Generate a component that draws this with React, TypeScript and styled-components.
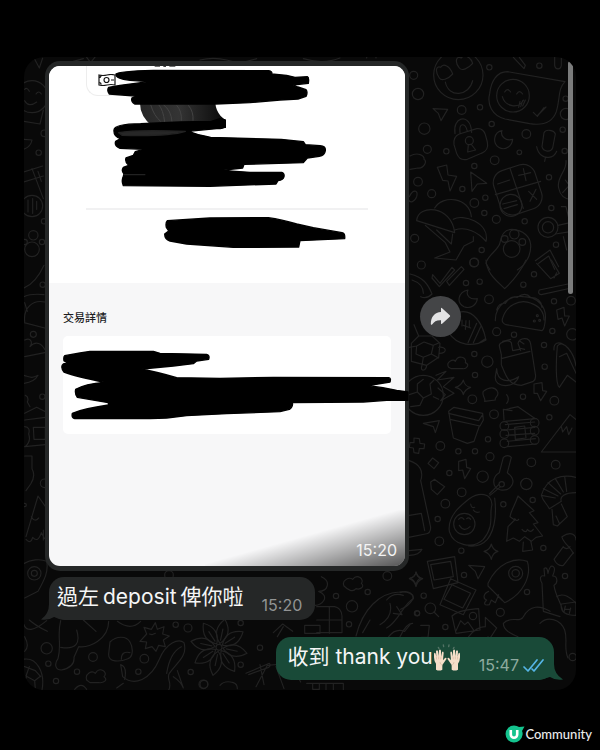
import React from "react";
import styled, { createGlobalStyle } from "styled-components";

const GlobalStyle = createGlobalStyle`
  * { box-sizing: border-box; }
  body { margin: 0; background: #000; }
  button { font: inherit; }
`;

const latin = `Inter, "Noto Sans CJK TC", sans-serif`;

const Page = styled.div`
  display: flex;
  flex-direction: column;
  min-height: 100vh;
  padding: 57px 24px 0;
  background: #000;
  font-family: ${latin};
`;

const ChatPanel = styled.main`
  position: relative;
  display: flex;
  flex-direction: column;
  gap: 6px;
  padding: 4px 22px 10px 21px;
  border-radius: 20px;
  background: #090909;
  overflow: hidden;
`;

const Wallpaper = styled.svg`
  position: absolute;
  inset: 0;
  width: 100%;
  height: 100%;
  fill: none;
  stroke: #222222;
  stroke-width: 3.5;
  stroke-linecap: round;
  stroke-linejoin: round;
`;

const ScrollThumb = styled.div`
  position: absolute;
  top: 4px;
  right: 3px;
  width: 5px;
  height: 233px;
  border-radius: 3px;
  background: #7b7c7c;
`;

const MessageRow = styled.div<{ $mine?: boolean }>`
  position: relative;
  display: flex;
  align-items: center;
  gap: 11px;
  justify-content: ${(p) => (p.$mine ? "flex-end" : "flex-start")};
  margin-top: ${(p) => (p.$mine ? "11px" : "0")};
`;

const PhotoBubble = styled.div`
  position: relative;
  flex: 0 1 364px;
  padding: 5px 4px;
  border-radius: 15px;
  background: #252727;
`;

const Photo = styled.div`
  position: relative;
  border-radius: 11px;
  background: #f7f7f8;
  overflow: hidden;
`;

const ReceiptHead = styled.div`
  height: 217px;
  padding: 0 37px;
  background: #fff;
`;

const ReceiptChip = styled.div`
  width: 180px;
  height: 30px;
  padding: 4px 11px;
  border: 1px solid #ededed;
  border-width: 0 0 1px 1px;
  border-radius: 0 0 0 12px;
`;

const Divider = styled.hr`
  height: 2px;
  margin: 112px 0 0;
  border: 0;
  background: #f1f1f2;
`;

const ReceiptBody = styled.div`
  height: 283px;
  padding: 26px 14px;
`;

const SectionTitle = styled.h2`
  margin: 0 0 11px;
  color: #1d1d1f;
  font-family: "Noto Sans CJK TC", sans-serif;
  font-size: 11px;
  font-weight: 500;
  line-height: 16px;
`;

const DetailCard = styled.div`
  height: 98px;
  border-radius: 5px;
  background: #fff;
`;

const Shade = styled.div`
  position: absolute;
  right: 0;
  bottom: 0;
  width: 200px;
  height: 56px;
  background: linear-gradient(to bottom right, rgba(0, 0, 0, 0) 48%, rgba(0, 0, 0, 0.3) 72%, rgba(0, 0, 0, 0.66) 100%);
`;

const Scribbles = styled.svg`
  position: absolute;
  top: 5px;
  left: 4px;
  width: 360px;
  height: 500px;
  pointer-events: none;
`;

const Time = styled.time<{ $tone: "photo" | "grey" | "green" }>`
  color: ${(p) => ({ photo: "#f4f4f4", grey: "#929494", green: "#8eaa9f" })[p.$tone]};
  font-size: 16px;
  line-height: 18px;
`;

const PhotoTime = styled.div`
  position: absolute;
  right: 8px;
  bottom: 7px;
  display: flex;
`;

const ShareButton = styled.button`
  display: flex;
  flex: none;
  align-items: center;
  justify-content: center;
  width: 41px;
  height: 41px;
  padding: 0;
  border: 0;
  border-radius: 50%;
  background: #444547;
  cursor: pointer;
`;

const Bubble = styled.div<{ $mine?: boolean }>`
  position: relative;
  display: flex;
  align-items: flex-end;
  gap: 18px;
  min-height: 43px;
  margin-left: ${(p) => (p.$mine ? "0" : "4px")};
  padding: ${(p) => (p.$mine ? "0 10px 6px 12px" : "0 13px 6px 8px")};
  border-radius: 15px;
  background: ${(p) => (p.$mine ? "#194a38" : "#252727")};
`;

const Tail = styled.svg<{ $mine?: boolean }>`
  position: absolute;
  bottom: 0;
  ${(p) => (p.$mine ? "right: -9px;" : "left: -8px;")}
  width: 24px;
  height: 24px;
  fill: ${(p) => (p.$mine ? "#194a38" : "#252727")};
`;

const MessageText = styled.p`
  position: relative;
  display: flex;
  align-items: center;
  gap: 4px;
  margin: 0;
  padding-bottom: 2px;
  color: #f5f6f6;
  font-size: 21px;
  line-height: 30px;
  white-space: nowrap;
`;

const Words = styled.span`
  display: flex;
  align-items: center;
`;

const Status = styled.span`
  position: relative;
  display: flex;
  align-items: center;
  gap: 4px;
`;

const TickIcon = styled.svg`
  flex: none;
  overflow: visible;
`;

const Footer = styled.footer`
  display: flex;
  align-items: center;
  justify-content: flex-end;
  margin: 34px -16px 0 0;
`;

const BrandName = styled.span`
  color: #ececec;
  font-family: Lato, sans-serif;
  font-size: 13px;
  font-weight: 500;
  line-height: 20px;
`;

type Dot = [number, number, number];

const Dots = ({ items }: { items: Dot[] }) => (
  <>
    {items.map(([x, y, r], i) => (
      <circle key={i} cx={x} cy={y} r={r} />
    ))}
  </>
);

const upperRight: Dot[] = [
  [41, 76, 12], [54, 132, 17], [185, 180, 13], [240, 172, 8], [73, 236, 17], [275, 222, 8], [268, 52, 8],
  [418, 47, 8], [379, 252, 13], [358, 307, 7], [284, 331, 13], [82, 298, 12], [139, 304, 8], [223, 348, 8],
  [54, 395, 13], [95, 431, 12], [187, 417, 8], [223, 459, 13], [256, 443, 8], [253, 489, 8], [289, 508, 12],
  [374, 514, 8], [447, 382, 8], [454, 474, 8], [44, 565, 12], [245, 600, 8], [223, 637, 13], [468, 584, 8],
  [64, 645, 12], [488, 239, 8], [498, 192, 17], [497, 146, 8], [494, 303, 8],
];
const middleRight: Dot[] = [
  [222, 8, 13], [198, 69, 8], [239, 65, 8], [267, 118, 13], [402, 43, 8], [370, 74, 8], [462, 124, 8],
  [513, 122, 13], [457, 213, 8], [517, 223, 17], [290, 215, 12], [342, 224, 8], [223, 282, 8], [262, 305, 17],
  [432, 255, 8], [434, 320, 8], [225, 345, 8], [217, 418, 13], [369, 410, 8], [463, 422, 13], [448, 472, 8],
  [282, 463, 13], [264, 538, 8], [121, 558, 13], [175, 574, 8], [225, 574, 8], [270, 590, 12],
];
const lowerRight: Dot[] = [
  [394, 37, 13], [467, 44, 13], [379, 102, 17], [248, 80, 17], [148, 69, 8], [185, 127, 13], [136, 161, 13],
  [113, 207, 8], [118, 274, 13], [184, 302, 8], [398, 150, 8], [310, 163, 8], [430, 294, 8], [192, 375, 8],
  [71, 437, 8], [52, 490, 7], [136, 531, 8], [301, 487, 12], [381, 426, 8], [495, 378, 8], [518, 621, 11],
];
const lowerLeft: Dot[] = [
  [80, 325, 17], [85, 371, 8], [219, 351, 13], [171, 395, 8], [108, 423, 8], [373, 356, 13], [355, 395, 8],
  [467, 254, 8], [504, 264, 12], [512, 396, 8], [550, 433, 13], [43, 100, 20], [43, 100, 9], [447, 105, 13],
];
const lowerMiddle: Dot[] = [
  [562, 228, 13], [408, 288, 8], [503, 276, 8], [456, 319, 17], [447, 373, 8], [651, 340, 8], [122, 369, 8],
  [180, 443, 8], [122, 494, 8], [12, 553, 12], [273, 515, 8],
];

const Doodles = () => (
  <Wallpaper viewBox="0 0 1656 1899" preserveAspectRatio="xMidYMid slice" aria-hidden="true">
    <g transform="translate(1128 -21)">
      <Dots items={upperRight} />
      <circle cx="175" cy="75" r="74" />
      <path d="M136 96c10 50 72 42 82-4M118 84c-14-20-10-38 4-32 8-14 28-4 36 20-14 16-34 22-40 12zM178 54c-16-20-8-38 6-30 8-12 28-4 34 16-14 16-32 24-40 14z" />
      <path d="M322 65l173 30c-22 22-14 50-26 90-12 34-42 42-80 36l-74-14c-40-10-54-44-46-76 4-38 22-66 53-66z" />
      <circle cx="339" cy="137" r="49" />
      <path d="M307 140c8 30 48 38 64 10M314 126q8-14 18 0M350 132q8-14 18 0M360 154l-4 18m12-20l-6 18m14-20l-8 18M400 187l12 12 20-26m-18 22l24-24" />
      <path d="M99 176l44 2-20 34-8-22zM165 251c-8-50 40-60 48-18l2 14M180 248c-4-30 16-32 22-4M178 252l52-16c14-2 22 4 26 18l6 22c4 18-2 28-18 34l-42 18c-16 4-26-2-32-18l-8-26c-2-16 2-26 16-32z" />
      <circle cx="208" cy="272" r="12" />
      <path d="M205 284l-2 22 24-6-14-18M306 242c-24 4-30 36-10 50 20 12 40-4 42-24-22 6-38-10-32-26zM432 248c6-12 30-8 34 4l-8 42c-6 14-28 12-32-4zM410 290c4 24 22 34 36 32 14 0 20-8 24-18M436 324l-2 10M112 352l28-7 4 30 26 4-20 44-6-30-16-2zM212 366l48 34-28 2-16 22z" />
      <rect x="288" y="350" width="130" height="138" rx="38" transform="rotate(-18 353 419)" />
      <path d="M330 355l40 120M286 434l136-40M293 402l36-12M356 376l36-8M370 356l8 36M386 424l24 24m-2-30l-18 36M308 462l42-10M312 476l40-12" />
      <circle cx="333" cy="466" r="33" />
      <path d="M50 512c4-50 104-48 114 36zM104 474c24-40 104-34 110 26M160 508c28-18 110 10 98 66-24-28-60-46-94-34M76 526l60 52 14 28-46 18 64 6 24-42 28-14 0-14M110 540l44 42 4-30" />
      <path d="M270 660l-12-20c2-22 40-42 42-62 4-26 18-40 36-40 34 2 54 22 56 46 2 30-14 60-40 76" />
      <circle cx="335" cy="597" r="25" /><circle cx="343" cy="553" r="14" /><circle cx="314" cy="567" r="10" /><circle cx="367" cy="576" r="10" />
      <circle cx="444" cy="532" r="30" /><circle cx="444" cy="532" r="17" />
      <path d="M474 526l36-8M466 552l50-8M484 470l14 0 12 50M490 560l10 40M406 632l44-32 26 50M416 640l30-22 18 40M498 332c4 30-30 50-22 82 4 22 20 34 40 36M496 390l12 16-20 22M30 318c24-14 44 0 42 10 10 6 0 28-18 26l-24 4M28 440c10-22 28-22 22 0-6 16-20 20-24 10M340 22l32 34 4-10-18-24M464 22v24c2 14 18 14 20 0V22" />
    </g>
    <g transform="translate(1128 609)">
      <Dots items={middleRight} />
      <path d="M98 44l22 26 36-48 8 8-46 50-22-26zM140 64l44-44 8 8-44 48zM258 0c2 40 30 60 56 86 28-26 50-56 64-86M410 10l42 46 26-16-24-40M462 54l8-16M418 90l86-18M424 104l90-20M418 90q-6 12 6 14M30 42c40 10 54 30 66 60-10 10-22 14-34 8M36 60c24 8 34 20 34 40M204 90c-30 6-36 38-12 50 20 8 38-6 40-24-22 4-36-10-28-26z" />
      <path d="M286 182c-2-50 50-78 84-72 42 0 70 30 66 68-2 22-4 32-10 34l-108-18c-10-4-14-10-10-20 10-36 50-60 86-44 28 10 38 30 38 50M290 150q6-22 26-20 14-24 36-18 24-18 40 0 30 0 34 30" />
      <circle cx="412" cy="167" r="3" /><circle cx="419" cy="181" r="3" /><circle cx="403" cy="183" r="3" />
      <path d="M180 156c40-8 68 34 78 84-38 22-86 18-112-22M190 196l22 8M186 180l0 18m12-16l-2 26m12-26l0 20M230 190l-26 58M242 200l-22 48M256 236l-20 14M470 150l22-8 2 26 14 0-14 30-8-24-12 4z" />
      <path d="M34 250l22-22 40 0 24 22-4 42-36 24-46-12zM50 258l22-12 28 10-6 26-24 10-22-10zM100 256l18-8M94 282l22 12M56 228l-14-34M50 258l-22 4M70 292l-4 24c-8 20 12 18 14 0M116 262c24-4 28 18 2 18M146 322c-10-16 14-26 20-18 8-22 36-12 30 4 16 6 2 20-8 18h-34zM190 360q4 20 22 22-18 6-22 22-4-18-24-22 18-4 24-22z" />
      <path d="M304 284l-6-26c-2-10 26-22 36-10l4 24 20-4M304 296l86-22M304 284l0 30c14 34 20 60 60 62l36-12c8-6 8-12 6-22l-14-90c-4-24-34-18-38-2l8 22M308 244l24-6M360 244l12 8M358 264l16 4M290 326c2 40 34 44 66 24-10 36-74 36-70 0zM478 382c-12-10-10-80-6-124 18-22 50 20 56 60M462 270c-2-22 14-26 30-16M478 382l24-36 26 20M478 290l22-10 28 60M250 394c20-16 36-12 42 0 8 14-10 18-6 26l-32 4c4-8-10-20-4-30zM402 372l24-4 2 24 12 2-18 28-10-22-10 0z" />
      <circle cx="70" cy="406" r="60" /><path d="M28 404l24-8 18 18-10 22-28 4M52 396l0-24 18-14M70 414l24-12-4-30 12-12M100 410l16 8M108 346l30-12-26 26 50-8-32 28 32 20-40 22 14-18-22-20" />
      <path d="M146 454l16-12 86 18 2 20-10 18-90-20zM146 460l90 22 12-18M150 480l10 54 42 16 20-6 16-46M320 404q10 14 0 26M310 450l44-10 52 36M312 480l-2-32 26 4M316 484l90-8M316 494l88-8M318 510l86-8M318 526l86-6M322 544l84-8M322 560l88-8M344 502l30-4 4 36-32 4z" />
      {[0, 24, 52].map((y) => (<g key={y}><circle cx="313" cy={498 + y} r="13" /><circle cx="404" cy={488 + y} r="13" /></g>))}
      <path d="M424 576l86-112 20 16M424 576h104M484 500l4 16 12-16 6 24 10-20M70 490l48-8-12 36-6-18zM42 534l16 2 2 14 14 2-2 14-14 0-2 14-14-2-2-14-12-2 2-14 12 0z" />
    </g>
    <g transform="translate(1128 1179)">
      <Dots items={lowerRight} />
      <path d="M98 24l18 14-14 18-18-16zM176 34l22-6 2 24 12 4-18 30-6-26-12 2zM92 96l12-8 10 8 20 14-22 24-18-16zM310 22q12-10 24 0l-12 46c34 26 10 56-20 52-28-6-26-40-4-52zM302 110l-32 26M296 104l-28 28" />
      <circle cx="305" cy="103" r="8" />
      <path d="M208 146c30-20 66-18 68 18-10 30 10 60-26 104-30 30-90 20-102-24-6-46 34-78 60-98zM284 144c4 30 6 90-22 124-16 18-36 22-56 20" /><circle cx="193" cy="222" r="32" />
      <path d="M178 226q14 22 32 4M176 208q8-10 16 0M200 206q6-6 12 2M212 162q2 14 12 10M220 180q6 10 18 6M354 138c-10 30-20 40-24 62l14 10-20 20-4 44 20-10 18 10 16-14 20 14 14-12 20-4-28-36 14-4-26-30 14-6zM370 276l-2 28 30-4-6-28M344 206q6 10 12 2M366 238q12 14 16 0 10 12 18 0M528 82c-40-10-88 0-104 54 6 20 16 24 24 40l36-22c-6-14 10-26 44-26M424 136l42 8M430 116l44 22M444 98l38 34M466 86l24 40M494 80l6 44M456 178l4 46 12 4 30-28-18-38M468 198l10 22M486 260c30-20 42-2 42 10M486 262c6 20 24 26 34 48M510 290q-8 10-20 2M490 290l-28 38q10 22 28 18l30-38" />
      <path d="M274 282q4 18 20 22-16 4-20 24-4-18-22-24 18-4 22-22zM48 366q4 16 20 20-16 6-20 24-4-18-20-24 18-4 20-20zM206 346l48 4-20 36-8-22zM82 334l82-14 10 78-74 18zM92 344l60-10 8 46-58 10zM152 386l76 34-38 74-70-30zM156 404l56 26-24 44-56-26zM264 400c28-60 80-80 118-66 14 44-14 100-68 124l-50-50z" /><circle cx="347" cy="370" r="21" /><circle cx="347" cy="370" r="11" />
      <path d="M266 424c-16 6-18 22-6 26-10 10-8 18 8 14l6-14 12 8 10-24M290 434l16 16M426 400c-8-14-6-26 8-22l-2-22q10-8 12 14 6-28 16-20 8 4-2 28c16 0 16 22 4 28 4 30 20 50 26 76M426 400l4 84 50 16M470 440c20-14 44 4 58 20M484 462l44-6v40c-30 0-48-10-44-34zM492 486l4-18M508 490l4-16M496 478h12M420 520c22-22 60-14 74 20 10 30-4 54 10 84M310 520c20-24 50 0 60-20 20-36 50-34 80-16M310 520c0 20 20 30 44 40" />
      <circle cx="91" cy="475" r="16" /><path d="M102 486l14 14M156 498c20-20 60-20 80-22l4 64-72 10zM168 542l14-30 12 12 10-8 18 26M208 498a11 11 0 1 0 22 0a11 11 0 1 0-22 0M206 560c14-18 30-30 50-30v-28l34 32-26 40v-14M62 526h26l-4 36h-20M0 428c26-10 44 6 38 20-12 20-26 26-36 30M28 32c30 10 44 30 34 60M62 92l30 140q0 20-16 20l-50 10M28 196l36-6 10 52M28 302l38-4q-8 18-38 18M0 560c10-22 22-40 38-40" />
    </g>
    <g transform="translate(-12 -21)">
      <circle cx="36" cy="140" r="48" /><path d="M14 118q6-8 14 6M48 132q8-12 16 0M14 152q12 22 36 4M40 20l18 34 10-30M10 214l50 8M60 222l10-42M10 268l26 2q-4 22-26 28M10 366l58-18M10 396l60-18M36 356l34 90M54 364l10 30" />
      <circle cx="36" cy="468" r="32" /><path d="M24 450v36M38 446v44M50 454v24" />
      <Dots items={[[73, 250, 10], [56, 308, 8], [72, 514, 8], [40, 556, 14], [36, 598, 22], [14, 576, 8], [66, 576, 8]]} />
      <path d="M160 34l30-8M200 22l12 16 14-18M540 30q40-10 80 0 40 14 90-4M850 26q60 18 110-2M1040 24a14 14 0 0 1 28 0" />
    </g>
    <g transform="translate(-12 609)">
      <Dots items={[[68, 74, 8], [40, 223, 9], [67, 410, 8], [14, 735, 5], [74, 670, 13]]} />
      <path d="M12 84c30-12 48-42 60-68M12 110q22-10 60-6M14 184c-4-40 24-66 60-58M12 188l62 16M22 154l-8-26M14 240c20-10 24 10 16 20 18-20 36-8 44 8M14 290l60-12M12 346c20 6 22 10 42 0q-10 20-42 24M16 406q12 6 6 20l8 14M14 460l36-18 28 14M14 480l62-8M14 560l62-6M40 502h36v36H42zM14 500q18 2 12 22 8 22-10 38M14 588h22v38q12 22-4 46l-14 20M18 830l36-122 24 34M34 770q10 18 22 4M18 838q14 16 20-6 16 18 26-14l10 18M70 810v30" />
    </g>
    <g transform="translate(-12 1449)">
      <Dots items={lowerLeft} />
      <path d="M10 72c20-14 52-16 70-8 6 30-6 54-26 90l-40 20M10 250q12 40 70-8M28 240q20 18 54 34M14 290q16 30 0 44M122 242c-12 46 4 70-8 114-12 16-8 34 10 34 30-6 40-18 38-38l14-32c30 4 90-20 90-76M170 270c12 40-2 60-48 52M190 240l38 34M292 244q40 30 70 0M270 306c20-20 50-18 60 0 10 18 10 44-6 50-24 10-60 12-58-14zM304 358q0-26 26-20M380 282l-8-20 22 6 12-20 6 20 20-8-4 22 20 6-18 12 6 20-20-4-8 18-12-14-20 6 4-20-20-2zM388 282l8 2 10-4M308 410c34 30 84 10 110-52 20-50 58-64 74-50 12 40-22 60-44 92-10 18 10 28-2 50M308 410l-6-36M302 374q20 6 12 44M440 400c8-50 24-70 44-80M460 410q24 16 30 34l-18-52M290 444l20-14M200 420c-6-20 16-30 26-20 12-22 40-4 26 10 14 10-2 20-16 18h-26zM164 448q20-24 36 0M10 358c40-8 66 40 56 92M10 378l36 14 16 18M28 380l-10 28 26 14 18-14M20 408l-8 22M44 422l2 26" />
      {[0, 45, 90, 135, 180, 225, 270, 315].map((a) => (
        <path key={a} d="M597 310q-34-34 0-74q34 40 0 74M597 300v-34" transform={`rotate(${a + 12} 597 322)`} />
      ))}
      <circle cx="597" cy="322" r="9" />
    </g>
    <g transform="translate(528 1329)">
      <Dots items={lowerMiddle} />
      <path d="M432 258c-8-18 16-28 26-20 14-18 36 0 26 12 12 10-4 20-16 16-10 12-24 4-36-8zM468 408c20-80 70-130 130-132 30-4 44 10 42 20-30 14-44 70-80 88M560 300q20-24 50-14M570 310q10 40-30 64M590 320l16 24-26-4M510 360l-22 38M648 216q4 16 14 18-12 6-14 22-4-16-18-22 16-4 18-18M364 230c30 14 20 44-8 44 36 14 10 44-12 42M350 320h54q20 4 22 28v50h-76M314 376h46v24h-46zM388 320v80M350 360h76M220 398l28-26 30 22M232 410l18-30M138 520l70-30q6 6-2 12l-60 22M180 494l12 60M168 560l34-64 44-4M228 500l24 66M272 492l30 54M60 556q14-16 40-8 12 4 12 18M320 550h110v22M338 550v18h20v-18M378 550v22M400 550v22M566 410q20-26 48-16l16-20" />
    </g>
  </Wallpaper>
);

const Redactions = () => (
  <Scribbles viewBox="0 0 1080 1500" aria-hidden="true">
    <defs>
      <linearGradient id="marker" x1="0" x2="1">
        <stop offset="0" stopColor="#262626" />
        <stop offset="0.45" stopColor="#343434" />
        <stop offset="1" stopColor="#080808" />
      </linearGradient>
    </defs>
    <g transform="translate(-87 -48)" strokeLinejoin="round">
      <path d="M404 48h16M430 49h8M448 48h18" stroke="#444" strokeWidth="4" />
      <path d="M360 160h226q2 22 16 38l16 14v22l-220-4q-38-30-38-70z" fill="url(#marker)" />
      <path d="M392 164q10 34 30 50M416 164q14 16 18 52M430 164q24 18 26 52M470 166q16 18 14 46M505 166q16 18 14 46" fill="none" stroke="#444" strokeWidth="3" />
      <path stroke="#000" strokeWidth="4" d="M288 72Q296 64 400 61L746 62Q758 64 755 72L800 76L825 82L862 80Q868 82 865 100L818 105L834 111L858 119Q864 127 858 139L834 147L780 150L690 158L586 162H344Q332 155 336 144L355 139L268 132Q260 122 266 112L300 106L385 95L330 91Q286 86 288 72Z" />
      <path stroke="#000" strokeWidth="4" d="M362 221L480 216L574 214L600 206L616 210V230Q612 236 590 236L505 244Q530 254 572 262L784 268L850 275L856 284L900 287Q918 288 916 302Q914 316 898 319L862 324L850 338L672 343L668 354L605 361L690 367L785 367Q794 370 792 380Q790 390 774 392L768 402L570 409L310 407Q304 394 309 382L312 372Q303 362 310 352L326 346Q314 336 318 324L340 316L346 305L370 298L300 295Q282 288 287 274L302 266Q280 260 282 240Q282 222 362 221Z" />
      <path d="M296 248q50-10 200-4q-50 16-190 12zM312 374l64 0" fill="#272727" stroke="#222" strokeWidth="4" />
      <path stroke="#000" strokeWidth="4" d="M442 512L570 504L745 503Q784 508 830 522L880 533L966 548Q976 550 974 566L840 572L836 591L640 592L500 582L450 573Q434 568 434 552L446 543L439 532Q436 518 442 512Z" />
    </g>
    <g transform="translate(-27 672)">
      <path stroke="#000" strokeWidth="4" strokeLinejoin="round" d="M74 197L120 189L150 184L340 184L360 190L500 193Q510 195 506 208L470 213L460 221L400 228L305 237Q350 246 410 263L540 265L700 262L1046 263Q1054 264 1050 276L985 287Q1030 292 1070 301L1104 306V331H1040L970 336L757 338Q760 350 748 358L720 365L560 371L440 377L380 384L330 386H104Q94 384 97 370Q130 356 205 345V338L112 322Q104 312 107 298Q134 282 195 277Q110 260 72 246Q60 230 70 222L85 218L72 213Q70 200 74 197Z" />
    </g>
  </Scribbles>
);

const CashIcon = () => (
  <svg width="18" height="12" viewBox="0 0 18 12" fill="none" stroke="#151515" strokeWidth="1.2" aria-hidden="true">
    <path d="M1 1q4 1 8 0t8 0v10q-4-1-8 0t-8 0zM1 3.5q2 0 2-2M1 8.500q2 0 2 2" />
    <circle cx="8.500" cy="6" r="2.500" />
    <path d="M13 6h3" />
  </svg>
);

const ShareIcon = () => (
  <svg width="21" height="19" viewBox="0 0 21 19" aria-hidden="true">
    <path d="M11 1.600Q11 .3 12.100 1.200L19.800 8.200Q20.600 9 19.800 9.800L12.100 16.700Q11 17.500 11 16.200V13.200C6.500 13 4.300 14.400 2.100 17.500Q.8 18.500 .8 16.800C1 10 4.600 5.500 11 5.100Z" fill="#e3e3e4" />
  </svg>
);

const RaisedHands = () => (
  <svg width="28" height="27" viewBox="0 0 84 81" role="img" aria-label="Raised hands">
    <path d="M18 14l-2-4M32 8l-1-5M47 8l1-5M61 14l2-4" stroke="#537365" strokeWidth="4" strokeLinecap="round" />
    {["", "translate(84 0) scale(-1 1)"].map((t) => (
      <g key={t} transform={t} fill="#f6dfc9">
        <path d="M9 77V59Q3 51 3 40V29Q5 24 8 29L10 39L9 22Q12 16 15 22L17 37L18 19Q21 14 24 20V38L27 25Q30 20 32 26L30 49L36 42Q42 40 40 46L28 63V77Q19 82 9 77Z" />
        <path d="M10 39l1 8M17 37v9M24 38l-1 8M28 64q-7-3-7-10" fill="none" stroke="#c9a990" strokeWidth="1.500" />
      </g>
    ))}
  </svg>
);

const ReadTicks = () => (
  <TickIcon width="21" height="15" viewBox="0 0 21 15" fill="none" stroke="#55b5e6" strokeWidth="1.7" strokeLinecap="round" strokeLinejoin="round" aria-label="Read" role="img">
    <polyline points="1,9 5,13 14,2" />
    <polyline points="9,11 11,13 20,2" />
  </TickIcon>
);

const BrandMark = () => (
  <svg width="20" height="18" viewBox="0 0 20 18" aria-hidden="true">
    <path d="M9 .5Q12 .5 14 2L19.500 1.500L17 6Q18 8 17.500 10A8.500 8.500 0 1 1 9 .5Z" fill="#14c38e" />
    <path d="M5.800 5v4.500a3.200 3.200 0 0 0 6.400 0V5" fill="none" stroke="#fff" strokeWidth="2.600" />
  </svg>
);

export default function App() {
  return (
    <Page>
      <GlobalStyle />
      <ChatPanel>
        <Doodles />
        <MessageRow>
          <PhotoBubble>
            <Photo>
              <ReceiptHead>
                <ReceiptChip>
                  <CashIcon />
                </ReceiptChip>
                <Divider />
              </ReceiptHead>
              <ReceiptBody>
                <SectionTitle>交易詳情</SectionTitle>
                <DetailCard />
              </ReceiptBody>
              <Shade />
              <PhotoTime>
                <Time $tone="photo">15:20</Time>
              </PhotoTime>
            </Photo>
            <Redactions />
          </PhotoBubble>
          <ShareButton type="button" aria-label="Forward">
            <ShareIcon />
          </ShareButton>
        </MessageRow>
        <MessageRow>
          <Bubble>
            <Tail viewBox="0 0 24 24" aria-hidden="true">
              <path d="M8 4V8Q8 18 0 23.500Q8 24.500 13 21L24 24V4Z" />
            </Tail>
            <MessageText>
              <span>過左</span>
              <span>deposit</span>
              <span>俾你啦</span>
            </MessageText>
            <Time $tone="grey">15:20</Time>
          </Bubble>
        </MessageRow>
        <MessageRow $mine>
          <Bubble $mine>
            <Tail $mine viewBox="0 0 24 24" aria-hidden="true">
              <path d="M15 4V8Q15 18 24 23.500Q16 24.500 11 21L0 24V4Z" />
            </Tail>
            <MessageText>
              <Words>
                收到 thank you
                <RaisedHands />
              </Words>
            </MessageText>
            <Status>
              <Time $tone="green">15:47</Time>
              <ReadTicks />
            </Status>
          </Bubble>
        </MessageRow>
        <ScrollThumb />
      </ChatPanel>
      <Footer>
        <BrandMark />
        <BrandName>Community</BrandName>
      </Footer>
    </Page>
  );
}
